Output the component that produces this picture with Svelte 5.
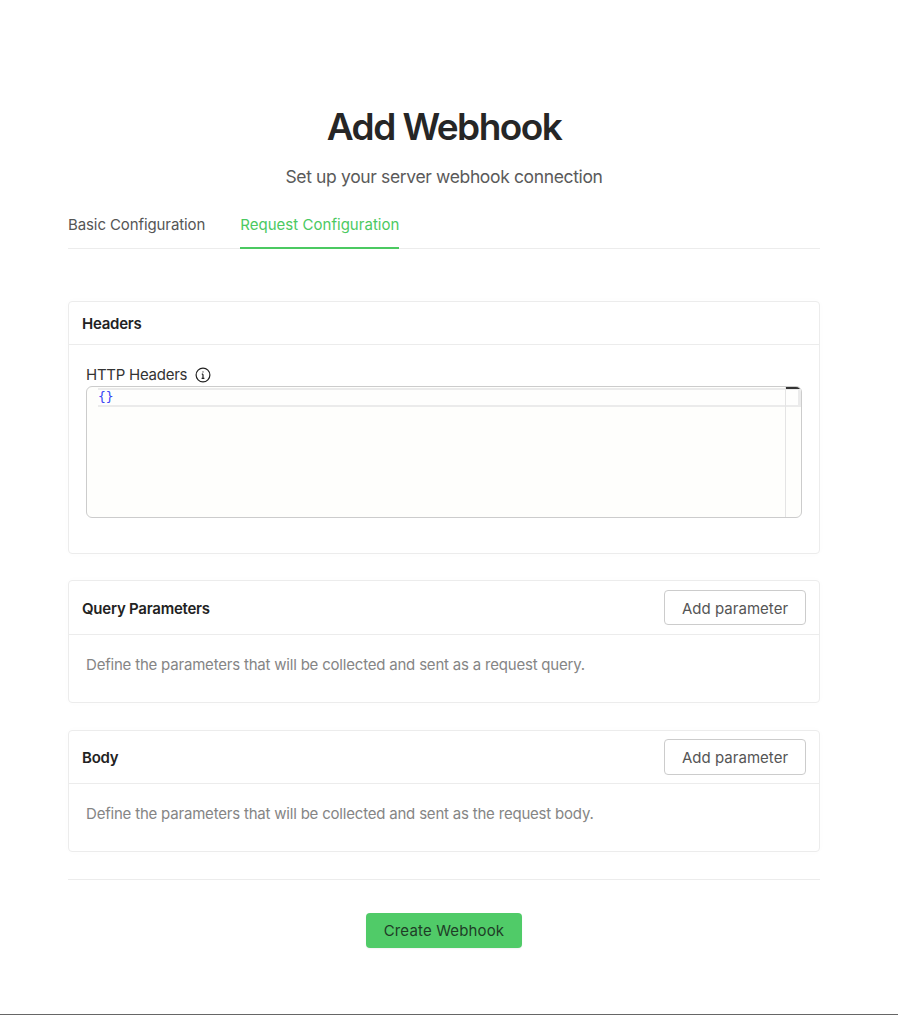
<script>
  const sections = [
    { title: 'Query Parameters', text: 'Define the parameters that will be collected and sent as a request query.' },
    { title: 'Body', text: 'Define the parameters that will be collected and sent as the request body.' }
  ];
</script>

<div class="page">
  <h1>Add Webhook</h1>
  <p class="sub">Set up your server webhook connection</p>
  <div class="tabs">
    <span class="tab">Basic Configuration</span>
    <span class="tab active">Request Configuration</span>
  </div>

  <section class="card first">
    <header class="head plain"><h2>Headers</h2></header>
    <div class="body">
      <div class="label">
        HTTP Headers
        <svg width="16" height="16" viewBox="0 0 16 16" fill="none" stroke="#222" stroke-width="1.2">
          <circle cx="8" cy="8" r="6.9" />
          <path d="M8 7.2v4M6.8 7.2H8M6.6 11.3h2.8" />
          <circle cx="8" cy="4.9" r="0.6" fill="#222" stroke="none" />
        </svg>
      </div>
      <div class="editor">
        <div class="line"><span class="code">{'{}'}</span></div>
        <div class="rail"></div>
        <div class="thumb"></div>
      </div>
    </div>
  </section>

  {#each sections as s}
    <section class="card">
      <header class="head"><h2>{s.title}</h2><button>Add parameter</button></header>
      <p class="desc">{s.text}</p>
    </section>
  {/each}

  <div class="foot"><button class="primary">Create Webhook</button></div>
</div>

<style>
  :global(body) { margin: 0; background: #fff; }
  .page {
    box-sizing: border-box;
    width: 898px;
    height: 1015px;
    padding: 102px 78px 0 68px;
    font-family: Inter, sans-serif;
    color: #222;
    border-bottom: 1px solid #666;
  }
  h1 { margin: 0; text-align: center; font-size: 37px; line-height: 50px; font-weight: 600; letter-spacing: -1.55px; color: #262626; }
  .sub { margin: 12px 0 0; text-align: center; font-size: 17.5px; line-height: 26px; color: #5a5a5a; letter-spacing: -0.36px; }
  .tabs { display: flex; gap: 35px; margin-top: 12px; border-bottom: 1px solid #ececec; height: 46px; }
  .tab { font-size: 15px; line-height: 46px; color: #555; letter-spacing: -0.1px; height: 46px; }
  .tab.active { color: #4bc961; border-bottom: 2px solid #4bc961; height: 45px; letter-spacing: 0.03px; }
  .card { border: 1px solid #ececec; border-radius: 4px; margin-top: 26px; box-shadow: 0 0 10px rgba(0, 0, 0, 0.015); }
  .card:nth-of-type(2) h2 { margin-top: 2px; }
  .card:nth-of-type(2) button { padding-top: 2px; height: 35px; margin-top: -1px; }
  .card:nth-of-type(3) { margin-top: 27px; }
  .card:nth-of-type(3) .head { height: 53px; }
  .card.first { margin-top: 52px; height: 253px; box-sizing: border-box; }
  .head { display: flex; align-items: center; justify-content: space-between; padding: 8px 13px; border-bottom: 1px solid #ececec; height: 54px; box-sizing: border-box; }
  .head.plain { height: 43px; }
  h2 { margin: 0; font-size: 15px; font-weight: 600; letter-spacing: -0.24px; color: #222; }
  button { font-family: inherit; font-size: 15px; }
  .head button { height: 36px; width: 142px; background: #fff; border: 1px solid #ccc; border-radius: 4px; color: #555; padding: 0; letter-spacing: 0.03px; }
  .body { padding: 20px 17px 0 17px; }
  .label { display: flex; align-items: center; gap: 8px; font-size: 15px; line-height: 20px; letter-spacing: -0.25px; color: #333; }
  .editor { position: relative; height: 132px; margin-top: 1px; border: 1px solid #ccc; border-radius: 6px; background: #fefefc; box-sizing: border-box; overflow: hidden; }
  .line { height: 19px; margin: 1px 0 0 11px; border: 2px solid #ebebeb; border-right-width: 3px; border-left: 0; background: #fefefd; box-sizing: border-box; }
  .code { display: block; font-family: "DejaVu Sans Mono", monospace; font-size: 13px; line-height: 13px; color: #3a45f5; }
  .rail { position: absolute; top: 0; bottom: 0; right: 15px; width: 1px; background: #e4e4e4; }
  .thumb { position: absolute; top: 0; right: 1px; width: 14px; height: 2px; background: #333; }
  .desc { margin: 0; padding: 20px 17px 27px; font-size: 15px; line-height: 20px; color: #858585; letter-spacing: -0.2px; }
  .foot { margin-top: 27px; border-top: 1px solid #ececec; display: flex; justify-content: center; padding-top: 33px; }
  .primary { width: 156px; height: 35px; border: 0; border-radius: 4px; background: #50cb68; color: #1f3d27; padding: 0; letter-spacing: 0.15px; box-shadow: 0 1px 2px rgba(0, 0, 0, 0.06); }
</style>
